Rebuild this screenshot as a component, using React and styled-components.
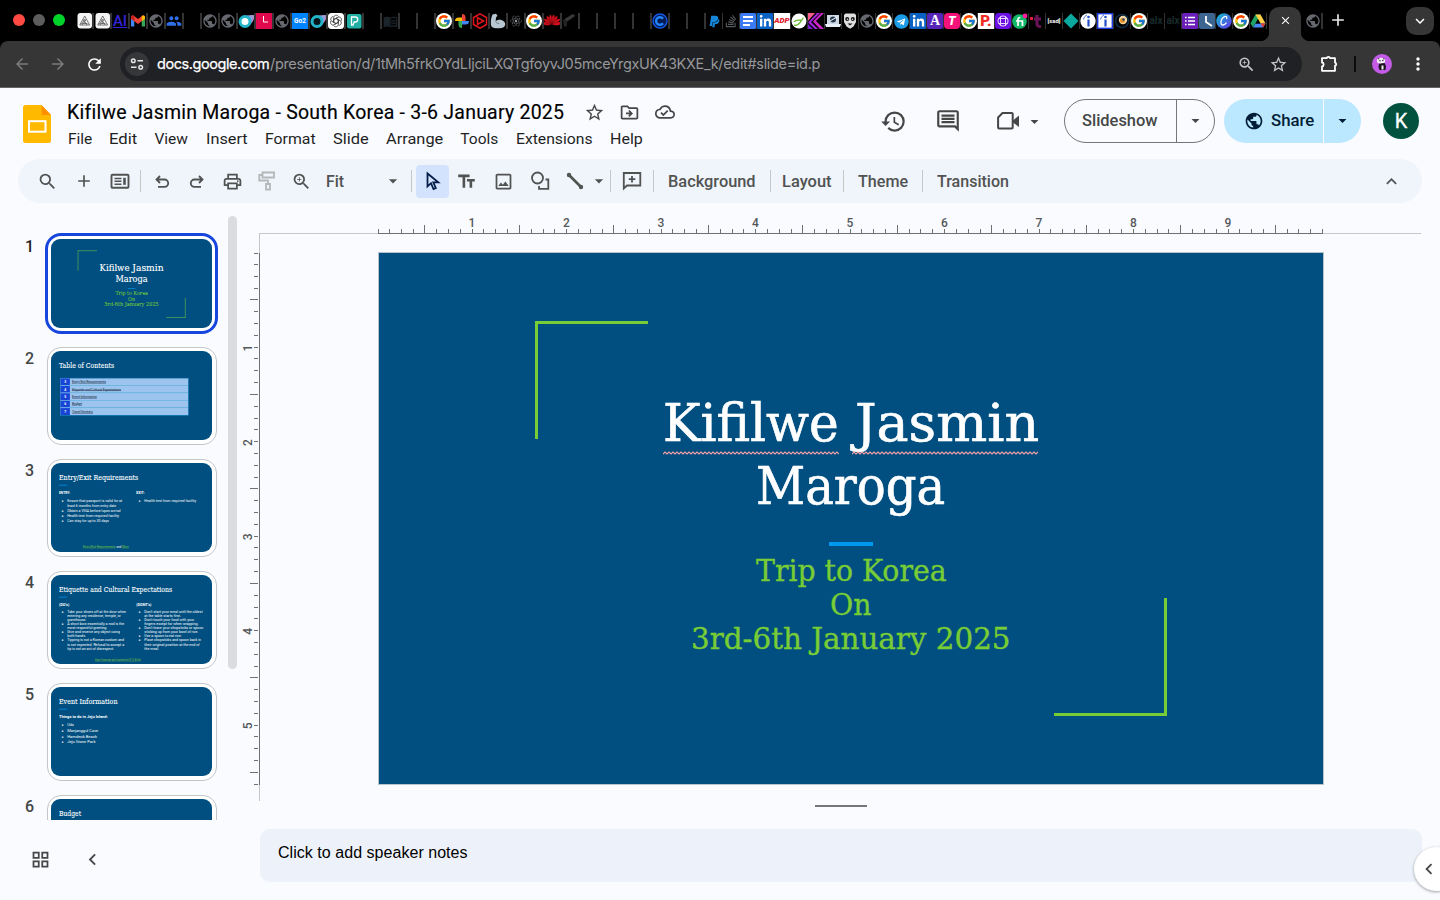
import React, { useLayoutEffect, useRef, useState } from "react";
import styled, { createGlobalStyle, css } from "styled-components";
import {
  MdArrowBack, MdArrowForward, MdRefresh, MdMoreVert, MdZoomIn, MdStarBorder, MdAdd, MdClose,
  MdPublic, MdHistory, MdOutlineComment, MdArrowDropDown, MdSearch, MdOutlinePrint, MdTextFields,
  MdOutlineImage, MdKeyboardArrowUp, MdKeyboardArrowDown, MdOutlineGridView, MdChevronLeft,
  MdOutlineDriveFileMove, MdOutlineCloudDone, MdPeople, MdOutlineMenuBook,
} from "react-icons/md";
import { FcGoogle } from "react-icons/fc";
import { FaPaypal, FaStackOverflow, FaLinkedinIn, FaTelegram } from "react-icons/fa";

const Global = createGlobalStyle`
  *, *::before, *::after { box-sizing: border-box; }
  body { margin: 0; background: #f9fbff; overflow: hidden; font-family: Roboto, "Liberation Sans", sans-serif; }
  svg { display: block; flex: none; }
`;

/* ---------- text fitted to a fixed width ---------- */
const FitBox = styled.span`
  display: inline-block;
  white-space: pre;
  flex: none;
  text-align: left;
  text-decoration: inherit;
  width: ${(p) => p.$w}px;
`;
const FitInner = styled.span`
  display: inline-block;
  text-decoration: inherit;
  transform-origin: 0 50%;
`;
function Fit({ w, stretch, children }) {
  const ref = useRef(null);
  const [natural, setNatural] = useState(0);
  useLayoutEffect(() => setNatural(ref.current.offsetWidth), []);
  let style;
  if (natural) {
    style = stretch
      ? { transform: `scaleX(${w / natural})` }
      : { letterSpacing: `${(w - natural) / Math.max(1, children.length - 1)}px` };
  }
  return (
    <FitBox $w={w}>
      <FitInner ref={ref} style={style}>{children}</FitInner>
    </FitBox>
  );
}

const Page = styled.div`
  width: 1440px;
  height: 900px;
  overflow: hidden;
  display: flex;
  flex-direction: column;
  background: #f9fbff;
`;
const Slot = styled.div`
  flex: none;
  width: ${(p) => p.$w}px;
  display: flex;
  align-items: center;
  justify-content: center;
  color: ${(p) => p.$c || "inherit"};
`;
const Spacer = styled.div`
  flex: 1;
`;

/* ---------- browser tabs ---------- */
const TabStrip = styled.div`
  flex: none;
  height: 41px;
  background: #000;
  display: flex;
  align-items: flex-start;
  padding-left: 13px;
`;
const Lights = styled.div`
  flex: none;
  display: flex;
  gap: 8px;
  margin-top: 14px;
  width: 63px;
`;
const Light = styled.div`
  width: 12px;
  height: 12px;
  border-radius: 50%;
  background: ${(p) => p.$c};
`;
const TabCell = styled.div`
  flex: none;
  width: ${(p) => p.$w}px;
  height: 16px;
  margin-top: 13px;
  display: flex;
  overflow: hidden;
  border-right: ${(p) => p.$w - 16}px solid #333;
`;
const ActiveTab = styled.div`
  position: relative;
  flex: none;
  width: 32px;
  height: 34px;
  margin: 7px 4px 0 2px;
  border-radius: 10px 10px 0 0;
  background: #363636;
  color: #fff;
  display: flex;
  justify-content: center;
  padding-top: 7px;
  &::before, &::after {
    content: "";
    position: absolute;
    bottom: 0;
    width: 9px;
    height: 9px;
  }
  &::before { left: -9px; background: radial-gradient(circle at 0 0, transparent 9px, #363636 9.5px); }
  &::after { right: -9px; background: radial-gradient(circle at 100% 0, transparent 9px, #363636 9.5px); }
`;
const NewTab = styled.div`
  color: #e6e6e6;
  margin: 10px 50px 0 5px;
`;
const TabSearch = styled.div`
  flex: none;
  width: 28px;
  height: 28px;
  margin-top: 7px;
  border-radius: 10px;
  background: #363636;
  color: #fff;
  display: flex;
  align-items: center;
  justify-content: center;
`;
const Fav = styled.div`
  width: 16px;
  height: 16px;
  flex: none;
  display: flex;
  align-items: center;
  justify-content: center;
  border-radius: ${(p) => p.$r || 0}px;
  background: ${(p) => p.$bg || "transparent"};
  color: ${(p) => p.$c || "#fff"};
  font: ${(p) => p.$weight || 700} ${(p) => p.$fs || 12}px/16px ${(p) => p.$font || "Roboto"}, sans-serif;
  text-decoration: ${(p) => (p.$u ? "underline" : "none")};
`;
const Svg16 = ({ children }) => <svg width="16" height="16" viewBox="0 0 16 16">{children}</svg>;

const Globe = () => <Fav $c="#666870"><MdPublic size={16} /></Fav>;
const GLogo = () => <Fav $bg="#fff" $r={8}><FcGoogle size={14} /></Fav>;
const Knot = () => (
  <Svg16>
    <rect x="1.500" y="0" width="14.500" height="15.500" rx="3" fill="#f4f4f4" />
    <path d="M8.700 3L3.800 12h9.800zM8.700 6L6.200 10.500h5.200M7.200 6.500l4 5.500M4.800 10l2 2M10.200 6L7.700 10.500" fill="none" stroke="#555" strokeWidth=".8" strokeLinejoin="round" />
  </Svg16>
);
const Gmail = () => (
  <Svg16>
    <path d="M1 13.500V3.600l3.300 2.500v7.400z" fill="#4285f4" />
    <path d="M15 13.500V3.600l-3.300 2.500v7.400z" fill="#34a853" />
    <path d="M1 5.800V4c0-1.600 1.800-2 2.800-1.200L8 6l4.200-3.200C13.200 2 15 2.400 15 4v1.800L8 11z" fill="#ea4335" />
    <path d="M11.700 3.200l.5-.4C13.200 2 15 2.400 15 4v1.800l-3.300 2.500z" fill="#fbbc04" />
    <path d="M4.300 3.200l-.5-.4C2.800 2 1 2.400 1 4v1.800l3.300 2.500z" fill="#c5221f" />
  </Svg16>
);
const Ring = ({ full }) => (
  <Svg16>
    <path d="M4 3l12-1c1 5-2 9-7 11z" fill="#c77bb0" />
    <path d="M8 3l7-1c1 3 0 6-3 8z" fill="#8f9fe0" />
    <circle cx="7" cy="8.500" r="5" fill={full ? "#fff" : "#06141c"} stroke="#22b4c8" strokeWidth="3" />
  </Svg16>
);
const OpenAI = () => (
  <Svg16>
    <rect width="16" height="16" rx="3.500" fill="#fff" />
    <g fill="none" stroke="#3a3a3a" strokeWidth=".8">
      {[0, 60, 120, 180, 240, 300].map((a) => (
        <path key={a} d="M5.700 6.700V4.600c0-2.600 3.600-3.200 4.700-1.100M5.700 6.700L8 5.400l3.300 1.900" transform={`rotate(${a} 8 8)`} />
      ))}
    </g>
  </Svg16>
);
const PTeal = () => (
  <Svg16>
    <rect x="1" y="1" width="14.500" height="14.500" rx="2" fill="#22b0a5" />
    <path d="M5.500 12V4h3.800c2 0 2.400 1.200 2.400 2.500S11 9 9.300 9H8.200L7 12z" fill="none" stroke="#fff" strokeWidth="1.300" />
  </Svg16>
);
const Photos = () => (
  <Svg16>
    <path d="M8 8V1a3.500 3.500 0 013.500 3.500V8z" fill="#ea4335" />
    <path d="M8 8h7a3.500 3.500 0 01-3.500 3.500H8z" fill="#4285f4" />
    <path d="M8 8v7a3.500 3.500 0 01-3.500-3.500V8z" fill="#34a853" />
    <path d="M8 8H1a3.500 3.500 0 013.500-3.500H8z" fill="#fbbc04" />
  </Svg16>
);
const RedHex = () => (
  <Svg16>
    <path d="M8 .8l6.500 3.700v7L8 15.200 1.500 11.500v-7zM5.500 4.500v7l6-3.500z" fill="none" stroke="#e0151b" strokeWidth="1.500" />
  </Svg16>
);
const Biceps = () => (
  <Svg16>
    <path d="M2.500 1.500L6 .8l1.500 2L6 4.500l-.3 3.700C7.500 6.500 11.500 6 14 8.500c2.500 2.500 1 5.800-2.500 6.500-4 .6-8 .3-9.800-1.300C0 11 1 5 2.500 1.500z" fill="#b7c6d0" />
    <path d="M5.700 8.500c1 1.800 2 2.200 3.500 1.800" fill="none" stroke="#6c7c88" />
  </Svg16>
);
const Atom = () => (
  <Svg16>
    <g fill="none" stroke="#77797d" strokeWidth=".8" strokeDasharray="1 .8">
      <ellipse cx="8" cy="8" rx="5.500" ry="2.300" /><ellipse cx="8" cy="8" rx="5.500" ry="2.300" transform="rotate(60 8 8)" />
      <ellipse cx="8" cy="8" rx="5.500" ry="2.300" transform="rotate(120 8 8)" />
    </g>
    <circle cx="8" cy="8" r="1.200" fill="#999" />
  </Svg16>
);
const Petals = () => (
  <Svg16>
    {[-82, -56, -32, -11, 11, 32, 56, 82].map((a) => (
      <path key={a} d="M8 11.500C5.500 8 5.800 3.500 8 1.200c2.200 2.300 2.500 6.800 0 10.300z" fill="#d3101c" stroke="#000" strokeWidth=".3" transform={`rotate(${a} 8 11.500)`} />
    ))}
  </Svg16>
);
const DarkBox = () => (
  <Svg16><path d="M1 7l9-6 3 .5v2L5 9v4l-3 1z" fill="#232324" /><path d="M3 6l7-4 3 .5L5 8z" fill="#3c3c3d" /></Svg16>
);
const Coin = () => (
  <Svg16>
    <circle cx="8" cy="8" r="7" fill="#061b50" stroke="#1459e8" strokeWidth="1.400" />
    <path d="M11 5.800A3.800 3.800 0 1011 10.200" fill="none" stroke="#2182ff" strokeWidth="2.400" />
  </Svg16>
);
const Docs = () => (
  <Svg16><rect width="16" height="16" rx="1.500" fill="#3b7cf5" /><path d="M3 4h10M3 8h10M3 12h7" stroke="#fff" strokeWidth="1.800" /></Svg16>
);
const Linked = () => <Fav $bg="#0a61c4" $r={1}><FaLinkedinIn size={13} /></Fav>;
const Leaf = () => (
  <Svg16><circle cx="8" cy="8" r="7.500" fill="#fff" /><path d="M3 12.500c5 0 6-3 9.500-8M3 9c2-3 4-1.500 8-2" fill="none" stroke="#67b82e" strokeWidth="1.300" /></Svg16>
);
const KLogo = () => (
  <Svg16>
    <path d="M0 0h7L0 8z" fill="#f65d8b" />
    <path d="M9 0h3L3 9l7 7H7L0 9.500z" fill="#a224dc" />
    <path d="M13 0h3L8 8l8 8h-4L5 8.500z" fill="#d026c8" />
    <path d="M0 11l5 5H0z" fill="#7a1fd0" />
  </Svg16>
);
const Laptop = () => (
  <Svg16><rect x="2" y="2" width="12" height="9" fill="#cfd9e5" /><path d="M0 11h16l-1 3H1z" fill="#e9eff6" /><circle cx="8" cy="6.500" r="3" fill="#24384e" /><path d="M5 8l7-4" stroke="#fff" /></Svg16>
);
const Mask = () => (
  <Svg16>
    <path d="M2 2l1.500-1.500h9L14 2v7l-2.500 4.500L8 15.700l-3.500-2.200L2 9z" fill="#dedede" />
    <circle cx="5.200" cy="6" r="2" fill="#111" /><circle cx="10.800" cy="6" r="2" fill="#111" />
    <circle cx="5.500" cy="6.200" r=".8" fill="#dedede" /><circle cx="10.500" cy="6.200" r=".8" fill="#dedede" />
    <path d="M5.500 10.500h5L8 12.500z" fill="#111" />
  </Svg16>
);
const PurpleNet = () => (
  <Svg16><rect width="16" height="16" rx="3.500" fill="#6c11e5" /><circle cx="8" cy="8" r="5" fill="none" stroke="#ead8ff" /><path d="M5.500 3.500v9M10.500 3.500v9M3.500 5.500h9M3.500 10.500h9" stroke="#ead8ff" /></Svg16>
);
const Fi = () => (
  <Svg16>
    <circle cx="7.500" cy="8.500" r="7.300" fill="#12b868" />
    <path d="M6 13V6.500C6 5 6.800 4.500 8.300 4.500M4 8h6.500v5" fill="none" stroke="#fff" strokeWidth="1.700" />
    <circle cx="13" cy="3" r="2.400" fill="#ff1f9c" />
  </Svg16>
);
const TMark = () => (
  <Svg16><rect x="1" y="4" width="3" height="3" fill="#e01b3c" /><path d="M8 2v9c0 2 1 2.500 4 2.500M5 6h7" fill="none" stroke="#6d1359" strokeWidth="3" /></Svg16>
);
const Diamond = () => <Svg16><path d="M8 .5L15.500 8 8 15.500.5 8z" fill="#0aa9a0" /></Svg16>;
const InfoDot = ({ square }) => (
  <Svg16>
    {square ? <rect x=".7" y=".7" width="14.600" height="14.600" fill="#fff" stroke="#1f3be0" strokeWidth="1.400" /> : <circle cx="8" cy="8" r="7.700" fill="#fff" />}
    <circle cx="8.500" cy="4" r="1.300" fill="#2450c8" />
    <path d="M8.500 6.500v7" fill="none" stroke="#2450c8" strokeWidth="2.200" />
    <path d="M3.500 6.500C4 4 5.500 2.500 7 2" fill="none" stroke="#2450c8" strokeWidth=".8" />
  </Svg16>
);
const Badge = () => (
  <Svg16><circle cx="8" cy="8" r="6.500" fill="none" stroke="#0d2c46" strokeWidth="1.600" /><circle cx="9" cy="7" r="4.200" fill="#f0d9a8" /><circle cx="8.500" cy="7.500" r="2.500" fill="#e29422" /><circle cx="9.500" cy="6.500" r="1.200" fill="#2c3d7c" /></Svg16>
);
const FormList = () => (
  <Svg16><rect width="16" height="16" rx="1.500" fill="#6a1fb8" /><path d="M6 4.500h7M6 8h7M6 11.500h7M3 4.500h1.600M3 8h1.600M3 11.500h1.600" stroke="#fff" strokeWidth="1.600" /></Svg16>
);
const ClockL = () => <Svg16><rect width="16" height="16" rx="2" fill="#3c658f" /><path d="M7 3v6l6 4" fill="none" stroke="#fff" strokeWidth="1.800" /></Svg16>;
const CanvaC = () => (
  <Svg16>
    <defs><linearGradient id="cv" x1="0" y1="0" x2="1" y2="1"><stop offset="0" stopColor="#0cc3cd" /><stop offset="1" stopColor="#6a2fe8" /></linearGradient></defs>
    <circle cx="8" cy="8" r="7.800" fill="url(#cv)" />
    <path d="M10.500 6c1-2-.5-3-2-2.300C6 4.800 4.500 8 5 10.500c.5 2.300 3.500 2 5.500-.8" fill="none" stroke="#fff" strokeWidth="1.300" />
  </Svg16>
);
const Drive = () => (
  <Svg16>
    <path d="M5.500 1.500h5L3 14.500.5 10.300z" fill="#1fa463" />
    <path d="M5.500 1.500h5l5 9h-5z" fill="#ffcf48" />
    <path d="M3 14.500l2.500-4h10l-2.500 4z" fill="#4688f4" />
    <path d="M15.500 10.500h-5l2.500 4z" fill="#e33b2e" />
    <path d="M8 6.500l2.200 4H5.800z" fill="#000" />
  </Svg16>
);

const tabIcons = [
  <Knot />, <Knot />, <Fav $c="#3324d8" $u $fs={15} $weight={500}>AI</Fav>, <Gmail />, <Globe />,
  <Fav $c="#2f6fe8"><MdPeople size={16} /></Fav>, null, <Globe />, <Globe />, <Ring full />,
  <Svg16><rect width="16" height="16" fill="#e0094e" /><path d="M7.500 3v6H12" fill="none" stroke="#fff" /></Svg16>,
  <Globe />, <Fav $bg="#0083ff" $fs={6.5}>Go2</Fav>, <Ring />, <OpenAI />, <PTeal />, null,
  <Fav $c="#1c242b"><MdOutlineMenuBook size={15} /></Fav>, null, null, <GLogo />, <Photos />, <RedHex />, <Biceps />,
  <Atom />, <GLogo />, <Petals />, <DarkBox />, null, null, null, null, <Coin />, null, null,
];
const narrowTabIcons = [
  <Fav $c="#1686d8"><FaPaypal size={13} /></Fav>, <Fav $c="#55585c"><FaStackOverflow size={14} /></Fav>, <Docs />, <Linked />,
  <Fav $bg="#fff" $c="#e0202c" $fs={8} $weight="italic 900">ADP</Fav>, <Leaf />, <KLogo />, <Laptop />, <Mask />, <Globe />,
  <GLogo />, <Fav $c="#1c9ce6" $bg="radial-gradient(#fff 5px, transparent 6px)"><FaTelegram size={15} /></Fav>, <Linked />,
  <Fav $bg="#5726b8" $r={2} $fs={14} $font="Liberation Serif">A</Fav>, <Fav $bg="#f5127b" $r={4} $fs={12} $weight="italic 900">T</Fav>,
  <GLogo />, <Fav $bg="#fff" $c="#ee2a20" $fs={15} $weight={900}>P.</Fav>, <PurpleNet />, <Fi />, <TMark />,
  <Fav $fs={6}>[sad]</Fav>, <Diamond />, <InfoDot />, <InfoDot square />, <Badge />, <GLogo />,
  <Fav $c="#172a2c" $fs={10}>alx</Fav>, <Fav $c="#172a2c" $fs={10}>alx</Fav>, <FormList />, <ClockL />, <CanvaC />, <GLogo />, <Drive />,
];

function Tabs() {
  return (
    <TabStrip>
      <Lights><Light $c="#ff4a43" /><Light $c="#5d5d5d" /><Light $c="#00d42b" /></Lights>
      {tabIcons.map((icon, i) => <TabCell key={i} $w={18}>{icon}</TabCell>)}
      {narrowTabIcons.map((icon, i) => <TabCell key={i} $w={17}>{icon}</TabCell>)}
      <ActiveTab><MdClose size={13} /></ActiveTab>
      <TabCell $w={18}><Globe /></TabCell>
      <NewTab><MdAdd size={20} /></NewTab>
      <Spacer />
      <TabSearch><MdKeyboardArrowDown size={18} /></TabSearch>
      <Slot $w={6} />
    </TabStrip>
  );
}

/* ---------- address bar ---------- */
const AddressBack = styled.div`
  flex: none;
  background: #000;
`;
const AddressRow = styled.div`
  height: 47px;
  background: #363636;
  border-bottom: 1px solid #65666a;
  border-radius: 8px 8px 0 0;
  display: flex;
  align-items: center;
  padding-left: 6px;
  color: #fff;
`;
const Omnibox = styled.div`
  width: 1182px;
  height: 34px;
  margin-left: 8px;
  border-radius: 17px;
  background: #202124;
  display: flex;
  align-items: center;
  padding: 0 5px;
  font: 400 14.500px/20px Inter, sans-serif;
  color: #97989b;
`;
const SiteInfo = styled.div`
  width: 24px;
  height: 24px;
  margin-right: 8px;
  border-radius: 50%;
  background: #363739;
  display: flex;
  align-items: center;
  justify-content: center;
`;
const Host = styled.span`
  color: #fff;
  -webkit-text-stroke: 0.250px #fff;
`;
const Divider = styled.div`
  flex: none;
  width: ${(p) => p.$w || 1}px;
  height: ${(p) => p.$h}px;
  background: ${(p) => p.$c};
  margin: 0 ${(p) => p.$mr || 0}px 0 ${(p) => p.$ml || 0}px;
`;
function AddressBar() {
  return (
    <AddressBack>
      <AddressRow>
        <Slot $w={32} $c="#7b7b7b"><MdArrowBack size={18} /></Slot>
        <Slot $w={40} $c="#7b7b7b"><MdArrowForward size={18} /></Slot>
        <Slot $w={32}><MdRefresh size={19} /></Slot>
        <Slot $w={2} />
        <Omnibox>
          <SiteInfo>
            <svg width="16" height="16" viewBox="0 0 16 16" fill="none" stroke="#e6e6e6" strokeWidth="1.500">
              <circle cx="4.300" cy="4.800" r="1.800" /><path d="M8.500 4.800H14M2 11.200h5.500" /><circle cx="11.700" cy="11.200" r="1.800" />
            </svg>
          </SiteInfo>
          <Host><Fit w={113}>docs.google.com</Fit></Host>
          <Fit w={550}>/presentation/d/1tMh5frkOYdLIjciLXQTgfoyvJ05mceYrgxUK43KXE_k/edit#slide=id.p</Fit>
          <Spacer />
          <Slot $w={26} $c="#c3c4c6"><MdZoomIn size={19} /></Slot>
          <Slot $w={38} $c="#c3c4c6"><MdStarBorder size={19} /></Slot>
        </Omnibox>
        <Slot $w={53}>
          <svg width="18" height="18" viewBox="0 0 18 18" fill="none" stroke="#fff" strokeWidth="1.800" strokeLinejoin="round">
            <path d="M2 3.200h4.800c.2-1.800 3-1.800 3.200 0H15v4.500c1.600.2 1.600 2.800 0 3v5.100H2v-4.300c2.200-.2 2.200-3.800 0-4z" />
          </svg>
        </Slot>
        <Divider $w={2} $h={16} $c="#0c0c0c" $ml={-1} />
        <Slot $w={52}>
          <svg width="20" height="20" viewBox="0 0 20 20">
            <circle cx="10" cy="10" r="10" fill="#c45be8" />
            <ellipse cx="9" cy="6.800" rx="4.200" ry="3" fill="#f4eef6" />
            <path d="M7 9.800l5.500-.8 1.500 3-.5 4H7.500l-1-3z" fill="#1c1420" />
            <path d="M5.500 5l1.500-1 .5 1.500zM11 4l1.500.5-.5 1.500z" fill="#222" />
            <circle cx="8" cy="6.800" r=".7" fill="#222" /><circle cx="10.800" cy="6.500" r=".7" fill="#222" />
            <path d="M9.500 11.500h2v4h-2z" fill="#eee" />
          </svg>
        </Slot>
        <Slot $w={20}><MdMoreVert size={20} /></Slot>
      </AddressRow>
    </AddressBack>
  );
}

/* ---------- document header ---------- */
const Header = styled.header`
  flex: none;
  height: 71px;
  display: flex;
  align-items: flex-start;
  padding-left: 23px;
  color: #444746;
`;
const LogoBox = styled.div`
  width: 44px;
  padding-top: 17px;
`;
const TitleCol = styled.div`
  width: 800px;
  padding-top: 11px;
`;
const TitleRow = styled.div`
  display: flex;
  align-items: center;
  height: 27px;
  padding-bottom: 1px;
  font-size: 19.500px;
  color: #000;
  -webkit-text-stroke: 0.150px #000;
`;
const MenuRow = styled.nav`
  display: flex;
  align-items: center;
  height: 26px;
  gap: 17.200px;
  padding-left: 1px;
  font-size: 15.500px;
  color: #1f1f1f;
`;
const HeaderActions = styled.div`
  display: flex;
  align-items: center;
  height: 44px;
  margin-top: 11px;
`;
const Camera = styled.svg`
  overflow: visible;
`;
const SplitButton = styled.div`
  display: flex;
  align-items: center;
  height: 44px;
  width: ${(p) => p.$w}px;
  border-radius: 22px;
  font-size: 16px;
  font-weight: 500;
  padding-bottom: 1px;
  ${(p) => p.$filled
    ? css`background: #bbe7ff; color: #001d35; margin-left: 9px; padding-left: 20px;`
    : css`border: 1px solid #747775; color: #444746; padding-left: 17px; margin-left: 30px;`}
`;
const SplitLine = styled.div`
  flex: none;
  width: 1px;
  height: ${(p) => p.$h}px;
  margin: 0 0 -1px ${(p) => p.$ml}px;
  background: ${(p) => p.$c};
`;
const Avatar = styled.div`
  width: 36px;
  height: 36px;
  margin-left: 22px;
  border-radius: 50%;
  background: #02513f;
  color: #fff;
  font-size: 20px;
  font-weight: 400;
  line-height: 36px;
  text-align: center;
  -webkit-text-stroke: 0.300px #fff;
`;
const menus = [["File", 24], ["Edit", 28], ["View", 34], ["Insert", 42], ["Format", 51], ["Slide", 36], ["Arrange", 57], ["Tools", 38], ["Extensions", 77], ["Help", 33]];

function DocHeader() {
  return (
    <Header>
      <LogoBox>
        <svg width="28" height="38" viewBox="0 0 28 38">
          <path d="M2.500 0H18.500L28 10v25.500A2.500 2.500 0 0125.500 38h-23A2.500 2.500 0 010 35.500v-33A2.500 2.500 0 012.500 0z" fill="#ffba00" />
          <path d="M18.500 0L28 10h-9.500z" fill="#ff9100" />
          <rect x="6" y="16.200" width="16.500" height="10.500" fill="none" stroke="#fff" strokeWidth="2" />
        </svg>
      </LogoBox>
      <TitleCol>
        <TitleRow>
          <Fit w={496}>Kifilwe Jasmin Maroga - South Korea - 3-6 January 2025</Fit>
          <Slot $w={62} $c="#444746"><MdStarBorder size={21} /></Slot>
          <Slot $w={9} $c="#444746"><MdOutlineDriveFileMove size={21} /></Slot>
          <Slot $w={61} $c="#444746"><MdOutlineCloudDone size={20} /></Slot>
        </TitleRow>
        <MenuRow>{menus.map(([label, w]) => <Fit key={label} w={w} stretch>{label}</Fit>)}</MenuRow>
      </TitleCol>
      <HeaderActions>
        <Slot $w={52}><MdHistory size={27} /></Slot>
        <Slot $w={57}><MdOutlineComment size={26} /></Slot>
        <Slot $w={58}>
          <Camera width="24" height="20" viewBox="-3.500 0 24 20">
            <path d="M6 2h9.200a1 1 0 011 1v13.500a1 1 0 01-1 1H2.600a1 1 0 01-1-1V6.500z" fill="none" stroke="#444746" strokeWidth="2" strokeLinejoin="round" />
            <path d="M16.500 9.500L22.500 4.500v11.500l-6-4.500z" fill="#444746" />
          </Camera>
        </Slot>
        <Slot $w={0}><MdArrowDropDown size={19} /></Slot>
        <SplitButton $w={151}>
          <Fit w={76} stretch>Slideshow</Fit>
          <SplitLine $h={42} $c="#747775" $ml={18} />
          <Slot $w={36}><MdArrowDropDown size={19} /></Slot>
        </SplitButton>
        <SplitButton $w={137} $filled>
          <MdPublic size={20} />
          <Slot $w={7} />
          <Fit w={43} stretch>Share</Fit>
          <SplitLine $h={44} $c="#f9fbff" $ml={9} />
          <Slot $w={37}><MdArrowDropDown size={19} /></Slot>
        </SplitButton>
        <Avatar>K</Avatar>
      </HeaderActions>
    </Header>
  );
}

/* ---------- toolbar ---------- */
const ToolPill = styled.div`
  flex: none;
  width: 1404px;
  height: 44px;
  margin-left: 18px;
  border-radius: 22px;
  background: #f0f4fb;
  display: flex;
  align-items: center;
  padding-left: 10px;
  font-size: 15.800px;
  font-weight: 500;
  color: #505352;
`;
const Selected = styled.div`
  width: 33px;
  height: 33px;
  margin-left: 4px;
  border-radius: 4px;
  background: #d3e3fd;
  display: flex;
  align-items: center;
  justify-content: center;
`;
const Sep = ({ ml, mr }) => <Divider $h={22} $c="#c4c7c5" $ml={ml} $mr={mr} />;
const Ico = ({ children, w = 20, sw = 1.8 }) => (
  <svg width={w} height={w} viewBox="0 0 20 20" fill="none" stroke="currentColor" strokeWidth={sw}>{children}</svg>
);

function Toolbar() {
  return (
    <ToolPill>
      <Slot $w={38}><MdSearch size={21} /></Slot>
      <Slot $w={35}><MdAdd size={20} /></Slot>
      <Slot $w={37}>
        <Ico sw={1.9}><rect x="1.500" y="3.800" width="17" height="13" rx="1" /><path d="M4.500 7.500h7M4.500 10.300h7M4.500 13.200h7" strokeWidth="1.500" /><path d="M14.500 6.800v7" strokeWidth="2.600" /></Ico>
      </Slot>
      <Sep ml={2} mr={3} />
      <Slot $w={35}><Ico><path d="M8 5L4.500 8.500 8 12M4.500 8.500h8a3.700 3.700 0 010 7.400H6" /></Ico></Slot>
      <Slot $w={36}><Ico><path d="M12 5l3.500 3.500L12 12M15.500 8.500h-8a3.700 3.700 0 000 7.400H14" /></Ico></Slot>
      <Slot $w={35}><MdOutlinePrint size={21} /></Slot>
      <Slot $w={34} $c="#b5b8b9"><Ico><path d="M5.500 1.500H17v5H5.500zM5.500 4H2.300v5.500H11V13M9 13h4v5.500H9z" /></Ico></Slot>
      <Slot $w={35}><MdZoomIn size={21} /></Slot>
      <Slot $w={7} />
      <Fit w={18} stretch>Fit</Fit>
      <Slot $w={97}><MdArrowDropDown size={20} /></Slot>
      <Divider $h={22} $c="#c4c7c5" $ml={-30} />
      <Selected>
        <svg width="20" height="20" viewBox="0 0 20 20"><path d="M4.500 2.500v13l3.500-3.300L10.500 18l2.300-1-2.500-5.600h5z" fill="none" stroke="#041e49" strokeWidth="1.800" /></svg>
      </Selected>
      <Slot $w={35}><MdTextFields size={21} /></Slot>
      <Slot $w={38}><MdOutlineImage size={21} /></Slot>
      <Slot $w={36}><Ico><circle cx="7.500" cy="7" r="5.500" /><path d="M15.500 8.500H18.300v9.300H9V15" /></Ico></Slot>
      <Slot $w={34}><Ico><path d="M4 4l12 12" strokeWidth="2.600" /><circle cx="4" cy="4" r="1.200" strokeWidth="2" /><circle cx="16" cy="16" r="1.200" strokeWidth="2" /></Ico></Slot>
      <Slot $w={14}><MdArrowDropDown size={20} /></Slot>
      <Sep ml={4} mr={3} />
      <Slot $w={35}><Ico><path d="M1.800 17.500V2h16.500v12.500H5z" /><path d="M10 5v6.500M6.800 8.200h6.500" /></Ico></Slot>
      <Sep ml={4} mr={14} />
      <Fit w={88} stretch>Background</Fit>
      <Sep ml={14} mr={11} />
      <Fit w={50} stretch>Layout</Fit>
      <Sep ml={11} mr={14} />
      <Fit w={50} stretch>Theme</Fit>
      <Sep ml={14} mr={14} />
      <Fit w={72} stretch>Transition</Fit>
      <Spacer />
      <Slot $w={61}><MdKeyboardArrowUp size={21} /></Slot>
    </ToolPill>
  );
}

/* ---------- slides ---------- */
const SLIDE_W = 945;
const SLIDE_H = 531;
const SlideCanvas = styled.div`
  position: relative;
  flex: none;
  width: ${SLIDE_W}px;
  height: ${SLIDE_H}px;
  background: #004f80;
  color: #fff;
  overflow: hidden;
`;
const TextBox = styled.div`
  position: absolute;
  left: ${(p) => p.$x}px;
  top: ${(p) => p.$y - 40}px;
  height: 80px;
  display: flex;
  align-items: center;
  font: ${(p) => p.$weight || 400} ${(p) => p.$size}px/80px ${(p) => (p.$serif ? '"DejaVu Serif Condensed", "DejaVu Serif", serif' : 'Roboto, sans-serif')};
  font-stretch: ${(p) => (p.$serif ? "condensed" : "normal")};
  -webkit-text-stroke: ${(p) => (p.$serif ? 0.012 : 0)}em ${(p) => p.$c || "#fff"};
  color: ${(p) => p.$c || "#fff"};
  text-decoration: ${(p) => (p.$u ? "underline" : "none")};
`;
const Bar = styled.div`
  position: absolute;
  left: ${(p) => p.$x}px;
  top: ${(p) => p.$y}px;
  width: ${(p) => p.$w}px;
  height: ${(p) => p.$h}px;
  background: ${(p) => p.$c || "#0097f0"};
`;
const Bracket = styled.div`
  position: absolute;
  left: ${(p) => p.$x}px;
  top: ${(p) => p.$y}px;
  width: 113px;
  height: 118px;
  border: 0 solid #78cc35;
  border-width: ${(p) => (p.$end ? "0 3px 3px 0" : "3px 0 0 3px")};
`;
const Squiggle = styled.svg`
  position: absolute;
  left: ${(p) => p.$x}px;
  top: 198px;
`;
const Wave = ({ x, w }) => {
  let d = "M0 3";
  for (let i = 2; i <= w; i += 2) d += `L${i} ${(i / 2) % 2 ? 1 : 3}`;
  return <Squiggle $x={x} width={w} height="5"><path d={d} fill="none" stroke="#f0a0a5" strokeWidth="1.200" /></Squiggle>;
};
const Line = ({ x, y, w, size, children, ...rest }) => (
  <TextBox $x={x} $y={y} $size={size} {...rest}><Fit w={w} stretch>{children}</Fit></TextBox>
);
const GREEN = "#78cc35";

function TitleSlide({ editing }) {
  return (
    <SlideCanvas>
      <Bracket $x={157} $y={68} />
      <Bracket $x={676} $y={345} $end />
      <Line x={285} y={170} w={176} size={52} $serif>Kifilwe</Line>
      <Line x={477} y={170} w={184} size={52} $serif>Jasmin</Line>
      {editing && <><Wave x={285} w={176} /><Wave x={474} w={186} /></>}
      <Line x={378} y={233} w={189} size={52} $serif>Maroga</Line>
      <Bar $x={451} $y={289} $w={44} $h={4} />
      <Line x={378} y={318} w={191} size={30} $serif $c={GREEN}>Trip to Korea</Line>
      <Line x={452} y={352} w={42} size={30} $serif $c={GREEN}>On</Line>
      <Line x={313} y={386} w={320} size={30} $serif $c={GREEN}>3rd-6th January 2025</Line>
    </SlideCanvas>
  );
}

const Contents = styled.div`
  position: absolute;
  left: 53px;
  top: 158px;
  width: 755px;
  height: 221px;
  border: 3px solid #1b8fd0;
  display: flex;
  flex-direction: column;
`;
const ContentsRow = styled.div`
  flex: 1;
  display: flex;
  align-items: center;
  background: #9cc4ee;
  color: #12263a;
  font: 400 20px/1 Roboto, sans-serif;
  text-decoration: underline;
  & + & { border-top: 3px solid #6dc4ee; }
`;
const ContentsNum = styled.div`
  width: 55px;
  align-self: stretch;
  margin-right: 12px;
  display: flex;
  align-items: center;
  justify-content: center;
  background: #1745d8;
  color: #fff;
  font-weight: 700;
`;
const contents = [["3", "Entry/Exit Requirements", 200], ["4", "Etiquette and Cultural Expectations", 288], ["5", "Event Information", 147], ["6", "Budget", 59], ["7", "Travel Itinerary", 123]];

const Heading = ({ w, children }) => <Line x={47} y={84} w={w} size={38} $serif>{children}</Line>;
const Accent = () => <Bar $x={47} $y={127} $w={48} $h={6} $c="#0080cf" />;
function Bullets({ x, y, step, lines, size }) {
  return lines.map(([text, w, dot], i) => (
    <React.Fragment key={i}>
      {dot && <TextBox $x={x - 34} $y={y + i * step} $size={size}>●</TextBox>}
      <Line x={x} y={y + i * step} w={w} size={size}>{text}</Line>
    </React.Fragment>
  ));
}

const ContentsSlide = () => (
  <SlideCanvas>
    <Heading w={323}>Table of Contents</Heading>
    <Contents>
      {contents.map(([n, text, w]) => (
        <ContentsRow key={n}><ContentsNum>{n}</ContentsNum><Fit w={w}>{text}</Fit></ContentsRow>
      ))}
    </Contents>
  </SlideCanvas>
);
const EntrySlide = () => (
  <SlideCanvas>
    <Heading w={465}>Entry/Exit Requirements</Heading>
    <Accent />
    <Line x={47} y={173} w={66} size={20} $weight={700}>ENTRY:</Line>
    <Line x={500} y={173} w={50} size={20} $weight={700}>EXIT:</Line>
    <Bullets x={95} y={222} step={29.5} size={20} lines={[
      ["Ensure that passport is valid for at", 323, true], ["least 6 months from entry date", 288], ["Obtain a VISA before/upon arrival", 314, true],
      ["Health test from required facility", 304, true], ["Can stay for up to 30 days", 245, true]]} />
    <Bullets x={548} y={222} step={29} size={20} lines={[["Health test from required facility", 304, true]]} />
    <Line x={188} y={494} w={190} size={18} $c={GREEN} $u>Entry/Exit Requirements</Line>
    <Line x={385} y={494} w={28} size={18}>and</Line>
    <Line x={418} y={494} w={38} size={18} $c={GREEN} $u>More</Line>
  </SlideCanvas>
);
const EtiquetteSlide = () => (
  <SlideCanvas>
    <Heading w={664}>Etiquette and Cultural Expectations</Heading>
    <Accent />
    <Line x={47} y={173} w={60} size={20} $weight={700}>(DO's)</Line>
    <Line x={500} y={173} w={90} size={20} $weight={700}>(DONT's)</Line>
    <Bullets x={95} y={214} step={24.2} size={20} lines={[
      ["Take your shoes off at the door when", 346, true], ["entering any residence, temple, or", 315], ["guesthouse.", 112],
      ["A short bow essentially a nod is the", 334, true], ["most respectful greeting.", 235], ["Give and receive any object using", 310, true],
      ["both hands.", 110], ["Tipping is not a Korean custom and", 334, true], ["is not expected. Refusal to accept a", 334], ["tip is not an act of disrespect.", 276]]} />
    <Bullets x={548} y={214} step={24.2} size={20} lines={[
      ["Don't start your meal until the oldest", 342, true], ["at the table starts first.", 214], ["Don't touch your food with your", 292, true],
      ["fingers except for when wrapping.", 317], ["Don't leave your chopsticks or spoon", 346, true], ["sticking up from your bowl of rice.", 317],
      ["Use a spoon to eat rice.", 220, true], ["Place chopsticks and spoon back in", 332, true], ["their original position at the end of", 324], ["the meal.", 86]]} />
    <Line x={258} y={502} w={270} size={16} $c={GREEN} $u>https://www.gov.govt/customs/en/8_16_8.html</Line>
  </SlideCanvas>
);
const EventSlide = () => (
  <SlideCanvas>
    <Heading w={343}>Event Information</Heading>
    <Accent />
    <Line x={47} y={175} w={286} size={21} $weight={700}>Things to do in Jeju Island:</Line>
    <Bullets x={95} y={224} step={33} size={20} lines={[["Udo", 40, true], ["Manjanggul Cave", 182, true], ["Hamdeok Beach", 176, true], ["Jeju Stone Park", 166, true]]} />
  </SlideCanvas>
);
const BudgetSlide = () => <SlideCanvas><Heading w={130}>Budget</Heading></SlideCanvas>;

/* ---------- filmstrip ---------- */
const Body = styled.main`
  flex: 1;
  display: flex;
  min-height: 0;
`;
const SideCol = styled.aside`
  width: 240px;
  flex: none;
  display: flex;
  flex-direction: column;
`;
const Film = styled.div`
  height: 617px;
  display: flex;
  overflow: hidden;
`;
const FilmList = styled.div`
  width: 228px;
  padding-top: 30px;
`;
const FilmRow = styled.div`
  display: flex;
  height: 112.100px;
`;
const FilmNum = styled.div`
  width: 35px;
  padding: 4px 1px 0 0;
  text-align: right;
  font-size: 16px;
  line-height: 20px;
  font-weight: 500;
  color: ${(p) => (p.$on ? "#1f1f1f" : "#444746")};
`;
const Frame = styled.div`
  flex: none;
  background: #fff;
  ${(p) => p.$on
    ? css`width: 173px; height: 101px; margin-left: 10px; border: 3px solid #1746dd; border-radius: 16px; padding: 3px;`
    : css`width: 170px; height: 98px; margin: 2px 0 0 12px; border: 1px solid #c4c7c5; border-radius: 14px; padding: 3px;`}
`;
const Thumb = styled.div`
  width: 161px;
  height: 89px;
  border-radius: 9px;
  overflow: hidden;
`;
const Shrink = styled.div`
  width: ${SLIDE_W}px;
  height: ${SLIDE_H}px;
  transform: scale(${161 / SLIDE_W});
  transform-origin: 0 0;
`;
const ScrollThumb = styled.div`
  width: 9px;
  height: 453px;
  margin-top: 13px;
  border-radius: 5px;
  background: #dadce0;
`;
const ViewSwitch = styled.div`
  display: flex;
  align-items: center;
  height: 79px;
  color: #444746;
`;
const slides = [TitleSlide, ContentsSlide, EntrySlide, EtiquetteSlide, EventSlide, BudgetSlide];

function Filmstrip() {
  return (
    <SideCol>
      <Film>
        <FilmList>
          {slides.map((S, i) => (
            <FilmRow key={i}>
              <FilmNum $on={i === 0}>{i + 1}</FilmNum>
              <Frame $on={i === 0}><Thumb><Shrink><S /></Shrink></Thumb></Frame>
            </FilmRow>
          ))}
        </FilmList>
        <ScrollThumb />
      </Film>
      <ViewSwitch>
        <Slot $w={80}><MdOutlineGridView size={21} /></Slot>
        <Slot $w={24}><MdChevronLeft size={23} /></Slot>
      </ViewSwitch>
    </SideCol>
  );
}

/* ---------- rulers and editor ---------- */
const Editor = styled.section`
  flex: 1;
  display: flex;
  flex-direction: column;
  align-items: flex-start;
  min-width: 0;
`;
const CanvasRow = styled.div`
  display: flex;
  align-items: flex-start;
  height: 567px;
`;
const Stage = styled.div`
  display: flex;
  justify-content: flex-end;
  width: ${SLIDE_W - 1}px;
  margin: 19px 0 0 119px;
  overflow: hidden;
  box-shadow: 0 0 0 1px #b8c4cc;
`;
const RulerLabel = styled.text`
  font: 500 12px Roboto, sans-serif;
  fill: #55585b;
  text-anchor: middle;
`;
const INCH = 94.48;
function HRuler() {
  return (
    <svg width="1200" height="31">
      <path d="M19 30.500H1181" stroke="#c4c7c5" />
      <path d="M138 30.500H1083" stroke="#6e7173" />
      {Array.from({ length: 81 }, (_, i) => {
        const x = Math.floor(137.7 + (i * INCH) / 8) + (i ? 0.5 : 1.5);
        return <path key={i} d={`M${x} 30V${i % 8 === 4 ? 22 : 26}`} stroke="#6e7173" />;
      })}
      {Array.from({ length: 9 }, (_, i) => <RulerLabel key={i} x={137.5 + (i + 1) * INCH} y="24">{i + 1}</RulerLabel>)}
    </svg>
  );
}
function VRuler() {
  return (
    <svg width="20" height="567">
      <path d="M19.500 0V567" stroke="#c4c7c5" />
      <path d="M19.500 19V551" stroke="#6e7173" />
      {Array.from({ length: 46 }, (_, i) => {
        const y = Math.floor(18.7 + (i * INCH) / 8) + (i ? 0.5 : 1.5);
        return <path key={i} d={`M18 ${y}H${i % 8 === 4 ? 10 : 14}`} stroke="#6e7173" />;
      })}
      {Array.from({ length: 5 }, (_, i) => {
        const y = 19.5 + (i + 1) * INCH;
        return <RulerLabel key={i} x="12" y={y} transform={`rotate(-90 12 ${y})`}>{i + 1}</RulerLabel>;
      })}
    </svg>
  );
}
const Handle = styled.div`
  width: 52px;
  height: 2px;
  margin: 4px 0 22px 575px;
  background: #747775;
`;
const NotesRow = styled.div`
  display: flex;
  width: 1200px;
  padding-left: 20px;
`;
const Notes = styled.div`
  flex: none;
  width: 1162px;
  height: 53px;
  border-radius: 10px;
  background: #edf2fa;
  padding: 14px 18px;
  font: 400 16px/20px "Liberation Sans", Arial, sans-serif;
  color: #000;
`;
const SideTab = styled.div`
  position: relative;
  flex: none;
  width: 44px;
  height: 44px;
  margin: 18px 0 0 -8px;
  border-radius: 50%;
  background: #fff;
  box-shadow: 0 1px 3px rgba(60, 64, 67, 0.5);
  display: flex;
  align-items: center;
  padding-left: 4px;
  color: #444746;
`;

export default function App() {
  return (
    <Page>
      <Global />
      <Tabs />
      <AddressBar />
      <DocHeader />
      <Toolbar />
      <Body>
        <Filmstrip />
        <Editor>
          <HRuler />
          <CanvasRow>
            <VRuler />
            <Stage><TitleSlide editing /></Stage>
          </CanvasRow>
          <Handle />
          <NotesRow>
            <Notes><Fit w={190}>Click to add speaker notes</Fit></Notes>
            <SideTab><MdChevronLeft size={22} /></SideTab>
          </NotesRow>
        </Editor>
      </Body>
    </Page>
  );
}
